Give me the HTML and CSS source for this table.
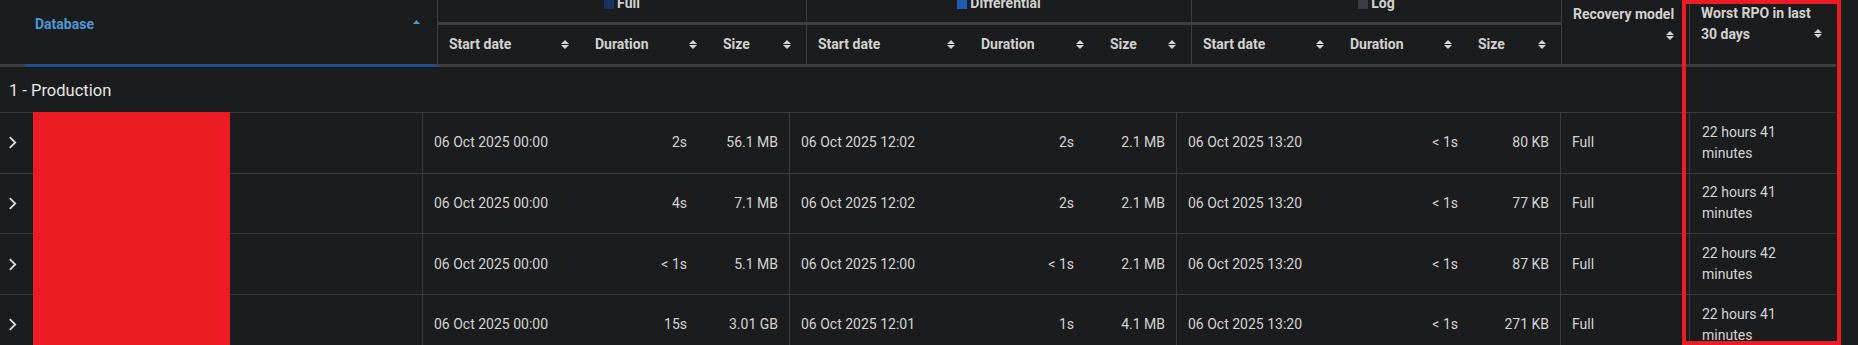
FILE: index.html
```html
<!DOCTYPE html>
<html>

<head>
  <meta charset="utf-8">
  <link rel="stylesheet" href="styles.css">
</head>

<body>
  <div class="table">
    <div class="thead">
      <div class="th th-expander"></div>
      <div class="th th-db">
        <span>Database</span>
        <svg class="sort-asc" viewBox="0 0 7 4"><polygon points="0,4 3.5,0 7,4" /></svg>
      </div>
      <div class="th-group grp"><span class="group-label"><span class="legend legend-full"></span>Full</span></div>
      <div class="th-group grp"><span class="group-label"><span class="legend legend-diff"></span>Differential</span></div>
      <div class="th-group grp"><span class="group-label"><span class="legend legend-log"></span>Log</span></div>
      <div class="th th-recovery grp">
        <span>Recovery model</span>
        <svg class="sort" viewBox="0 0 8 9"><polygon points="0,4 4,0 8,4" /><polygon points="0,5 4,9 8,5" /></svg>
      </div>
      <div class="th th-rpo grp">
        <span>Worst RPO in last 30 days</span>
        <svg class="sort" viewBox="0 0 8 9"><polygon points="0,4 4,0 8,4" /><polygon points="0,5 4,9 8,5" /></svg>
      </div>

      <div class="th th-sub grp"><span>Start date</span><svg class="sort" viewBox="0 0 8 9"><polygon points="0,4 4,0 8,4" /><polygon points="0,5 4,9 8,5" /></svg></div>
      <div class="th th-sub"><span>Duration</span><svg class="sort" viewBox="0 0 8 9"><polygon points="0,4 4,0 8,4" /><polygon points="0,5 4,9 8,5" /></svg></div>
      <div class="th th-sub"><span>Size</span><svg class="sort" viewBox="0 0 8 9"><polygon points="0,4 4,0 8,4" /><polygon points="0,5 4,9 8,5" /></svg></div>

      <div class="th th-sub grp"><span>Start date</span><svg class="sort" viewBox="0 0 8 9"><polygon points="0,4 4,0 8,4" /><polygon points="0,5 4,9 8,5" /></svg></div>
      <div class="th th-sub"><span>Duration</span><svg class="sort" viewBox="0 0 8 9"><polygon points="0,4 4,0 8,4" /><polygon points="0,5 4,9 8,5" /></svg></div>
      <div class="th th-sub"><span>Size</span><svg class="sort" viewBox="0 0 8 9"><polygon points="0,4 4,0 8,4" /><polygon points="0,5 4,9 8,5" /></svg></div>

      <div class="th th-sub grp"><span>Start date</span><svg class="sort" viewBox="0 0 8 9"><polygon points="0,4 4,0 8,4" /><polygon points="0,5 4,9 8,5" /></svg></div>
      <div class="th th-sub"><span>Duration</span><svg class="sort" viewBox="0 0 8 9"><polygon points="0,4 4,0 8,4" /><polygon points="0,5 4,9 8,5" /></svg></div>
      <div class="th th-sub"><span>Size</span><svg class="sort" viewBox="0 0 8 9"><polygon points="0,4 4,0 8,4" /><polygon points="0,5 4,9 8,5" /></svg></div>
    </div>

    <div class="group-row">1 - Production</div>

    <div class="tbody">
      <div class="redacted"></div>

      <div class="row">
        <div class="cell expander"><svg class="chevron" viewBox="0 0 8 12"><polyline points="1.5,1 6.5,6 1.5,11" /></svg></div>
        <div class="cell grp">06 Oct 2025 00:00</div>
        <div class="cell num">2s</div>
        <div class="cell num">56.1 MB</div>
        <div class="cell grp">06 Oct 2025 12:02</div>
        <div class="cell num">2s</div>
        <div class="cell num">2.1 MB</div>
        <div class="cell grp">06 Oct 2025 13:20</div>
        <div class="cell num">&lt; 1s</div>
        <div class="cell num">80 KB</div>
        <div class="cell grp">Full</div>
        <div class="cell grp rpo">22 hours 41 minutes</div>
      </div>

      <div class="row">
        <div class="cell expander"><svg class="chevron" viewBox="0 0 8 12"><polyline points="1.5,1 6.5,6 1.5,11" /></svg></div>
        <div class="cell grp">06 Oct 2025 00:00</div>
        <div class="cell num">4s</div>
        <div class="cell num">7.1 MB</div>
        <div class="cell grp">06 Oct 2025 12:02</div>
        <div class="cell num">2s</div>
        <div class="cell num">2.1 MB</div>
        <div class="cell grp">06 Oct 2025 13:20</div>
        <div class="cell num">&lt; 1s</div>
        <div class="cell num">77 KB</div>
        <div class="cell grp">Full</div>
        <div class="cell grp rpo">22 hours 41 minutes</div>
      </div>

      <div class="row">
        <div class="cell expander"><svg class="chevron" viewBox="0 0 8 12"><polyline points="1.5,1 6.5,6 1.5,11" /></svg></div>
        <div class="cell grp">06 Oct 2025 00:00</div>
        <div class="cell num">&lt; 1s</div>
        <div class="cell num">5.1 MB</div>
        <div class="cell grp">06 Oct 2025 12:00</div>
        <div class="cell num">&lt; 1s</div>
        <div class="cell num">2.1 MB</div>
        <div class="cell grp">06 Oct 2025 13:20</div>
        <div class="cell num">&lt; 1s</div>
        <div class="cell num">87 KB</div>
        <div class="cell grp">Full</div>
        <div class="cell grp rpo">22 hours 42 minutes</div>
      </div>

      <div class="row">
        <div class="cell expander"><svg class="chevron" viewBox="0 0 8 12"><polyline points="1.5,1 6.5,6 1.5,11" /></svg></div>
        <div class="cell grp">06 Oct 2025 00:00</div>
        <div class="cell num">15s</div>
        <div class="cell num">3.01 GB</div>
        <div class="cell grp">06 Oct 2025 12:01</div>
        <div class="cell num">1s</div>
        <div class="cell num">4.1 MB</div>
        <div class="cell grp">06 Oct 2025 13:20</div>
        <div class="cell num">&lt; 1s</div>
        <div class="cell num">271 KB</div>
        <div class="cell grp">Full</div>
        <div class="cell grp rpo">22 hours 41 minutes</div>
      </div>
    </div>
  </div>

  <div class="highlight"></div>
</body>

</html>
```

FILE: styles.css
```css
* {
  box-sizing: border-box;
  margin: 0;
  padding: 0;
}

:root {
  --background: #1b1c1e;
  --foreground: #d4d4d4;
  --header-foreground: #d2d2cf;
  --header-line: #3c4042;
  --row-line: #3a3b3d;
  --accent: #4f97d8;
  --accent-line: #1d4d8c;
  --legend-full: #17345f;
  --legend-diff: #1f5bb3;
  --legend-log: #3a3c3f;
  --annotation: #ed1c24;
}

html,
body {
  overflow: hidden;
}

body {
  width: 1858px;
  height: 345px;
  font-family: Roboto, 'Liberation Sans', Arial, sans-serif;
  font-size: 14px;
  line-height: 21px;
  background: var(--background);
  color: var(--foreground);
  position: relative;
}

.table {
  width: 1836px;
}

/* header */

.thead {
  display: grid;
  grid-template-columns: 25px 412px 147px 128px 94px 164px 129px 92px 148px 128px 94px 128px 147px;
  grid-template-rows: 25px 39px;
  border-bottom: 3px solid var(--header-line);
  color: var(--header-foreground);
  font-weight: 700;
}

.th {
  display: flex;
}

.grp {
  border-left: 1px solid var(--header-line);
}

.th-expander {
  grid-row: span 2;
}

.th-db {
  grid-row: span 2;
  position: relative;
  justify-content: space-between;
  align-items: flex-start;
  padding: 14px 17px 0 10px;
  color: var(--accent);
}

.th-db::after {
  content: '';
  position: absolute;
  left: 0;
  right: 0;
  bottom: -3px;
  height: 3px;
  background: var(--accent-line);
}

.sort-asc {
  width: 7px;
  height: 4px;
  margin-top: 6px;
  fill: var(--accent);
}

.th-group {
  grid-column: span 3;
  display: flex;
  justify-content: center;
  align-items: flex-end;
  padding-bottom: 8px;
  border-bottom: 3px solid var(--header-line);
}

.group-label {
  display: flex;
  align-items: center;
  gap: 3px;
  white-space: nowrap;
}

.legend {
  width: 10px;
  height: 10px;
}

.legend-full {
  background: var(--legend-full);
}

.legend-diff {
  background: var(--legend-diff);
}

.legend-log {
  background: var(--legend-log);
}

.th-recovery {
  grid-row: span 2;
  flex-direction: column;
  align-items: flex-end;
  padding: 4px 15px 0 11px;
}

.th-recovery span {
  align-self: flex-start;
  white-space: nowrap;
}

.th-recovery .sort {
  margin-top: 6px;
}

.th-rpo {
  grid-row: span 2;
  align-items: flex-end;
  justify-content: space-between;
  padding: 2px 14px 0 11px;
}

.th-rpo span {
  width: 110px;
  margin-bottom: 19px;
}

.th-rpo .sort {
  margin-bottom: 26px;
}

.th-sub {
  justify-content: space-between;
  align-items: center;
  padding: 0 15px 0 11px;
}

.sort {
  width: 8px;
  height: 9px;
  flex-shrink: 0;
  fill: var(--header-foreground);
}

/* group + rows */

.group-row {
  height: 46px;
  display: flex;
  align-items: center;
  padding: 2px 0 0 9px;
  font-size: 16.5px;
  color: #e6e6e6;
  border-bottom: 1px solid var(--row-line);
}

.tbody {
  position: relative;
}

.row {
  display: grid;
  grid-template-columns: 422px 147px 129px 91px 164px 132px 91px 148px 145px 91px 129px 147px;
  height: 60.67px;
  border-bottom: 1px solid var(--row-line);
}

.cell {
  display: flex;
  align-items: center;
  padding: 0 11px;
  white-space: nowrap;
}

.row .grp {
  border-left: 1px solid var(--row-line);
}

.cell.num {
  justify-content: flex-end;
}

.cell.rpo {
  white-space: normal;
  padding: 0 14px 0 12px;
}

.expander {
  padding-left: 8px;
}

.chevron {
  width: 9px;
  height: 13px;
  fill: none;
  stroke: #d6dce2;
  stroke-width: 1.7;
}

/* annotations on the screenshot */

.redacted {
  position: absolute;
  top: -1px;
  left: 33px;
  width: 197px;
  bottom: 0;
  background: var(--annotation);
}

.highlight {
  position: absolute;
  top: 0;
  left: 1682px;
  width: 159px;
  height: 345px;
  border: 4px solid var(--annotation);
}
```
